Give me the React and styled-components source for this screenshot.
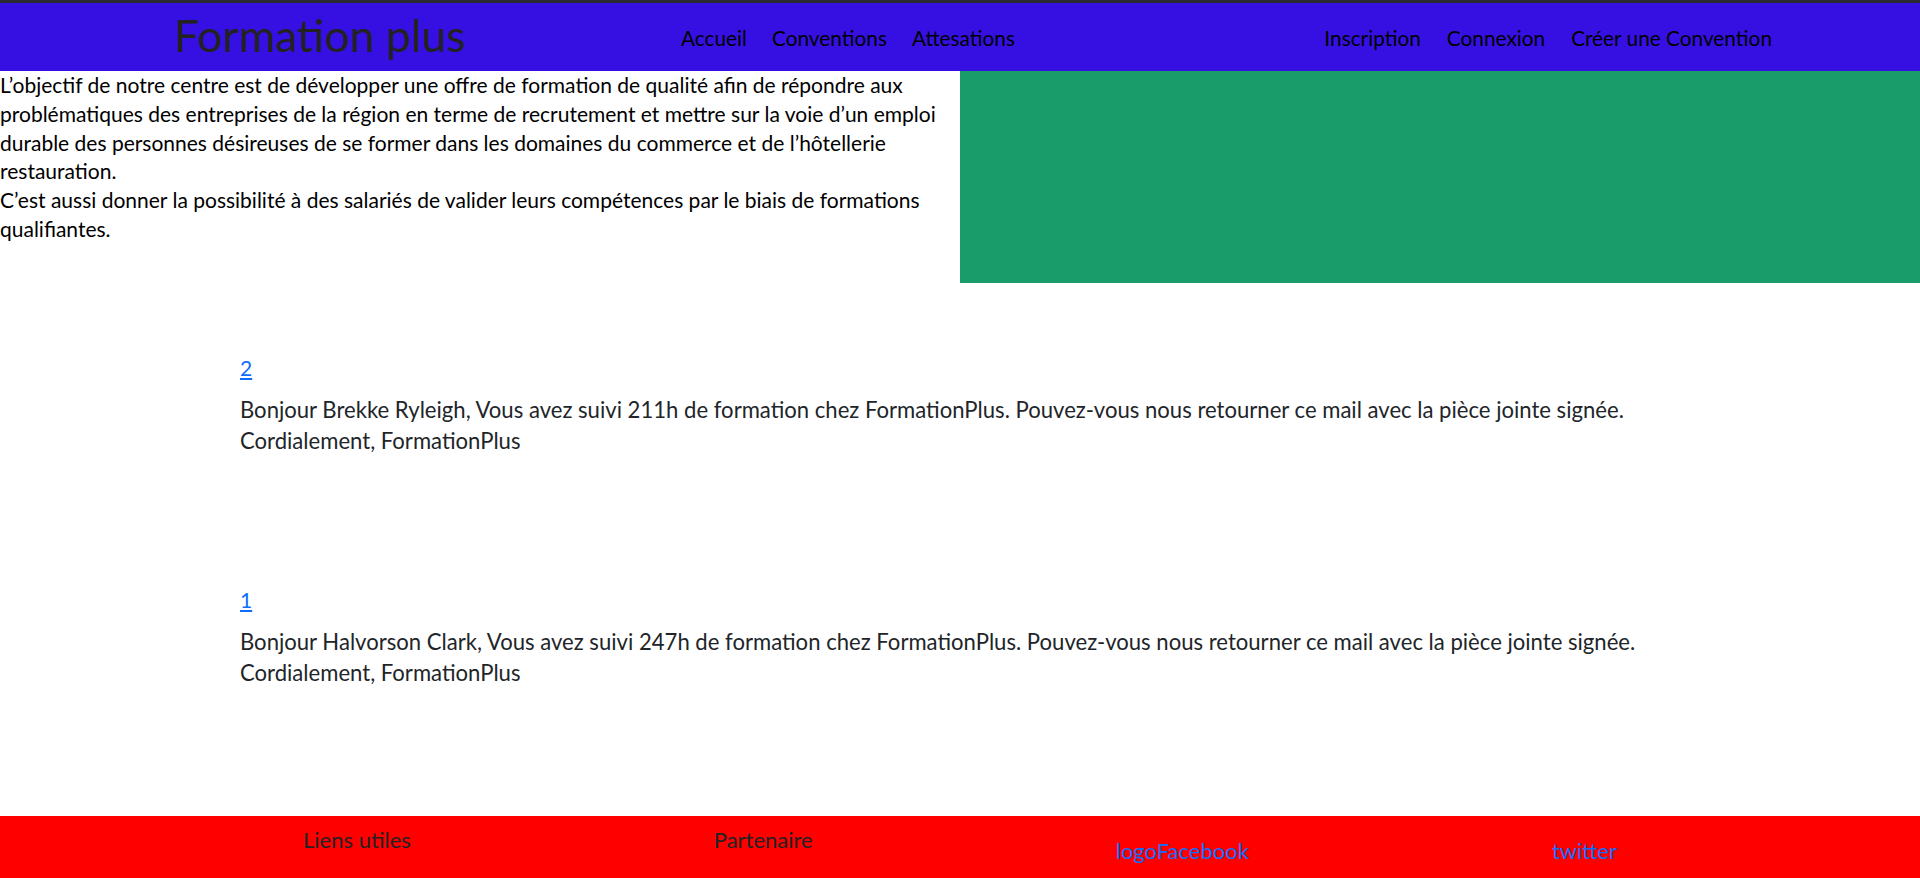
import React from "react";
import styled, { createGlobalStyle } from "styled-components";

const GlobalStyle = createGlobalStyle`
  * { box-sizing: border-box; }
  body {
    margin: 0;
    font-family: "Lato", "Open Sans", sans-serif;
    color: #212529;
    background: #fff;
  }
`;

const messages = [
  { id: 2, name: "Brekke Ryleigh", hours: 211 },
  { id: 1, name: "Halvorson Clark", hours: 247 },
];

function App() {
  return (
    <Page>
      <GlobalStyle />
      <Header>
        <Brand>Formation plus</Brand>
        <Nav>
          <NavItem>Accueil</NavItem>
          <NavItem>Conventions</NavItem>
          <NavItem>Attesations</NavItem>
        </Nav>
        <Nav $right>
          <NavItem>Inscription</NavItem>
          <NavItem>Connexion</NavItem>
          <NavItem>Créer une Convention</NavItem>
        </Nav>
      </Header>

      <Intro>
        <IntroText>
          L’objectif de notre centre est de développer une offre de formation de qualité afin de
          répondre aux problématiques des entreprises de la région en terme de recrutement et
          mettre sur la voie d’un emploi durable des personnes désireuses de se former dans les
          domaines du commerce et de l’hôtellerie restauration.
          <br />
          C’est aussi donner la possibilité à des salariés de valider leurs compétences par le
          biais de formations qualifiantes.
        </IntroText>
        <IntroVisual />
      </Intro>

      <Messages>
        {messages.map((m) => (
          <Message key={m.id}>
            <MessageLink href="#">{m.id}</MessageLink>
            <MessageText>
              Bonjour {m.name}, Vous avez suivi {m.hours}h de formation chez FormationPlus.
              Pouvez-vous nous retourner ce mail avec la pièce jointe signée. Cordialement,
              FormationPlus
            </MessageText>
          </Message>
        ))}
      </Messages>

      <Footer>
        <FooterTitle>Liens utiles</FooterTitle>
        <FooterTitle>Partenaire</FooterTitle>
        <FooterLink href="#">logoFacebook</FooterLink>
        <FooterLink href="#">twitter</FooterLink>
      </Footer>
    </Page>
  );
}

export default App;

const Page = styled.div`
  min-height: 100vh;
  display: flex;
  flex-direction: column;
`;

const Header = styled.header`
  display: flex;
  align-items: center;
  height: 71px;
  border-top: 3px solid #2b2a33;
  background: #3610e3;
`;

const Brand = styled.div`
  width: 681px;
  padding-left: 174px;
  font-size: 44.5px;
  color: #222;
  margin-top: -6px;
`;

const Nav = styled.nav`
  display: flex;
  gap: ${(p) => (p.$right ? "26px" : "25px")};
  margin-left: ${(p) => (p.$right ? "auto" : "0")};
  padding-right: ${(p) => (p.$right ? "148px" : "0")};
`;

const NavItem = styled.a`
  font-size: 20.8px;
  color: #000;
  cursor: pointer;
`;

const Intro = styled.section`
  display: grid;
  grid-template-columns: 960px 960px;
  height: 212px;
`;

const IntroText = styled.p`
  margin: 0;
  font-size: 21px;
  line-height: 28.8px;
  color: #000;
`;

const IntroVisual = styled.div`
  background: #199c69;
`;

const Messages = styled.main`
  display: flex;
  flex-direction: column;
  gap: 129px;
  padding: 70px 240px 128px;
`;

const Message = styled.article`
  display: flex;
  flex-direction: column;
  gap: 12px;
`;

const MessageLink = styled.a`
  font-size: 21px;
  line-height: 30px;
  color: #0d6efd;
  text-decoration: underline;
`;

const MessageText = styled.p`
  margin: 0;
  font-size: 22.1px;
  line-height: 30.5px;
  color: #212529;
`;

const Footer = styled.footer`
  display: flex;
  justify-content: space-evenly;
  align-items: flex-start;
  height: 62px;
  background: #ff0000;
`;

const FooterTitle = styled.div`
  padding-top: 10px;
  font-size: 22px;
  line-height: 28px;
  color: #222;
`;

const FooterLink = styled.a`
  padding-top: 21px;
  font-size: 22px;
  line-height: 28px;
  color: #0d6efd;
  text-decoration: none;
`;
